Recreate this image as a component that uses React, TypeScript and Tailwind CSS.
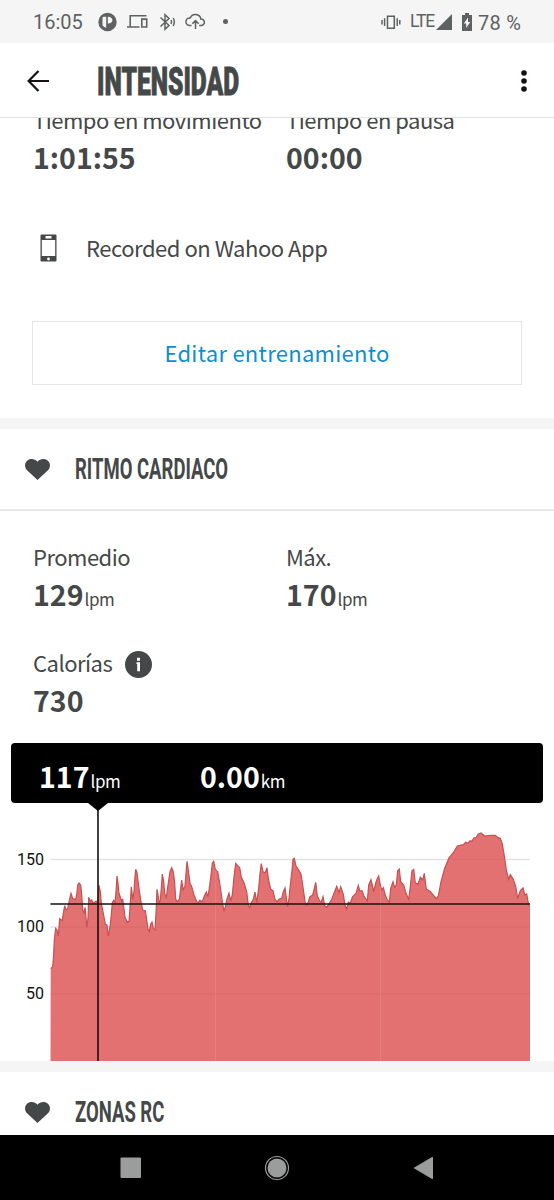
import type { ReactNode } from "react"

const AXIS = [
  { label: "150", y: 56.5 },
  { label: "100", y: 124 },
  { label: "50", y: 191 },
]

// Heart rate trace, x/y in chart pixels
const TRACE =
  "50.7,165.7 52.7,163.7 53.7,150 54.3,137 55.7,125.3 57,127 58.3,133 59.7,115.7 62.3,117.7 63.3,110.3 64.7,102.7 66,107 67.7,105.7 69.3,97.7 71,90.3 72.7,95.7 75.7,96.3 76.7,92 77.7,82 79,80 80.7,82 81.7,92 82.7,107 84,110 85,104.3 85.7,110.3 86.7,124.3 88,115.3 88.7,94.3 90.3,98 91.7,97 93,100.3 96,98.3 98,99.7 " +
  "99,82.3 100.3,88.7 101.3,100.3 103.3,110.3 105.3,121 107,122 108.3,133 110,123.7 111.3,112 112.3,99.7 113.7,97.3 115,99.7 116,88.7 117,73 118,80.3 119,90.3 120.3,94.3 121.7,98.3 122.7,95.7 123.7,103.7 125,114.3 127.3,119.3 129,118.3 130.3,100.3 131,88.7 131.3,83.7 132.7,96.3 134,88.7 134.7,77 135.7,66.3 137,69.7 138.7,83.7 140.7,97 142.7,107 145.3,107.7 146.7,117 148,126 149.3,128.7 150.7,121 152,119 153.3,125.3 155,127 " +
  "156,110.3 157,86.3 158,92 159,100.3 160.3,97 161.3,85.3 162.3,71 163.7,78.7 164.7,91 166.3,94.3 168,82 170,68.7 171.7,64.7 173.3,68.7 174.7,80.3 175.7,96.3 177.3,98.7 179.3,96.3 180.7,85.3 181.7,77 183,87 185,83 186,70.3 187,58.3 188.3,67 190,80.3 191.7,83.7 194,92 196.7,98.7 198.3,99.7 200,97.3 202.3,98.7 204.3,93 206.3,89 208,93.7 209.3,85.3 211,72 212.3,60.3 213.7,58.3 215.3,66.3 217.7,68.7 220,82 222.3,98.7 224,108.3 225.3,104.3 226.7,97 229,90.3 230.7,98 " +
  "232.3,92 234,73.7 235.7,60.3 239.7,64.7 241.3,74.3 244,79.7 246.7,88.7 248.3,102 249.7,104.7 251.3,99.7 253.3,96.3 255,89 256.7,99.7 258.7,85.3 260,70.3 261.3,60.7 263,68.7 265.3,69.7 267,64.7 268.3,75.3 270.7,86.3 273,87.7 275,96.3 277,98.7 279.3,96 281.7,95.3 283.3,88.7 285,85 286.3,95.3 287.7,103.7 289,95.3 290.3,82 292,67 293,56.3 294.3,55.3 296,63 298.7,67 301,71.3 302.7,82 305,98.7 306.7,102.3 308.3,98.7 310,93.7 312.7,92 314.3,85.3 315.7,79.3 317.3,93 319.3,97 321,99.7 323,93.7 324.7,102.7 326.7,104.3 " +
  "329.3,100.3 331.7,96.3 334,90.3 336.7,83.3 339,89.3 340.7,83.7 343.3,91.3 345,102 346.7,106.3 348.3,99 350.3,99.7 352.7,93.7 356,90.3 358.3,82.3 359.7,88 362,87.7 364,93 367.3,98 368.7,82 371,76.7 373.7,88.5 376.3,78 378.7,73 380.3,82 381.7,87 383.3,84.7 385.3,92 387.3,97 389.3,99.3 390.7,85.3 393,78.7 394.7,84.3 396.3,82 397.7,67.7 399.3,66 400.7,78.7 403.7,82 406,90.3 408.7,96.3 410.3,83.7 412,67.7 413.7,66.3 415.3,79.7 418,81.3 420.3,74.3 422.7,77 424.3,70.3 426.3,86.3 430,88.3 432.7,91.3 436.3,95.7 438.3,93 " +
  "441,78.7 444.7,65.3 449,54.7 453.3,49.7 457.3,43 463.3,41.7 465.7,39.3 468,40.3 470,37.7 472,38.3 473.7,35 476,34.7 478,31.3 481,30 484.7,33 490.7,32.3 495.3,32.3 498,34.7 500.3,35.3 502.3,41 504.3,53 506.3,67 508.7,76.3 510.3,71.7 513.3,76.3 515.7,83.7 517.7,95.3 520.3,87.7 523,85 524.7,92 526.7,91 528,98.7 529.3,103"

function StatusBar() {
  return (
    <div className="flex h-[43px] shrink-0 items-center bg-[#f5f5f5] pl-[33px] pr-[33px] font-['Roboto',sans-serif] text-[#5f6262]">
      <span className="w-[65px] text-xl">16:05</span>
      <svg className="h-5 w-[19px]" viewBox="0 0 19 20" fill="currentColor">
        <path fillRule="evenodd" d="M9.5.8a9.2 9.2 0 1 1 0 18.4 9.2 9.2 0 0 1 0-18.4ZM4.500 5.500v7.800c1 1.700 2.400 2.200 3.700 2.300V4.700H5.500zM9.800 4.700v6.800c2.800.2 4.600-1.200 4.600-3.400s-1.800-3.500-4.600-3.400Z" />
      </svg>
      <svg className="ml-2.5 h-4 w-[21px]" viewBox="0 0 21 16" fill="none" stroke="currentColor" strokeWidth="1.6">
        <path d="M19.500 1.800H3.200v10.400M0 13h12.500M14.800 5.100h4.900v7.900h-4.900z" />
      </svg>
      <svg className="ml-[11px] h-[18px] w-[18px]" viewBox="0 0 18 18" fill="none" stroke="currentColor" strokeWidth="1.5">
        <path d="m1.500 4.500 8.500 8-4 3.800V1.700l4 3.800-8.500 8M12 7.200q1 1.800 0 3.600M14.200 5q2.200 4 0 8" />
      </svg>
      <svg className="ml-2 h-[17px] w-[21px]" viewBox="0 0 21 17" fill="none" stroke="currentColor" strokeWidth="1.500">
        <path d="M6.500 12.500H4.700a3.700 3.700 0 0 1 0-7.500h.5a5.600 5.600 0 0 1 10.700 1.100 3.200 3.200 0 0 1 .6 6.400h-2.300M10.500 16V8M7.300 10.800l3.200-3.200 3.200 3.200" />
      </svg>
      <span className="ml-[17px] size-[5px] rounded-full bg-current" />
      <svg className="ml-auto h-4 w-5" viewBox="0 0 20 16" fill="none" stroke="currentColor" strokeWidth="1.5">
        <path d="M6.500 2.200h6.800v12H6.500zM3.600 4.300v7.700M1 6v4.500M16.200 4.300v7.700M18.800 6v4.500" />
      </svg>
      <span className="ml-[9px] w-[26px] text-[17.5px] tracking-[-1.2px]">LTE</span>
      <svg className="h-4 w-4" viewBox="0 0 16 16" fill="currentColor"><path d="M16 0v16H0z" /></svg>
      <svg className="ml-[10px] h-[18px] w-[10px]" viewBox="0 0 10 18" fill="currentColor">
        <path fillRule="evenodd" d="M3 0h4v2h3v16H0V2h3zM6 4.500 1.800 10.500h2.400V15L8.300 9H6z" />
      </svg>
      <span className="ml-1.5 whitespace-nowrap pt-0.5 text-xl tracking-[0.2px]">78 %</span>
    </div>
  )
}

function Heart() {
  return (
    <svg className="mt-px h-[21px] w-[25px]" viewBox="0 0 25 21" fill="#454848">
      <path d="M12.500 21 2.300 11.600C-.6 8.800-.7 4.500 1.900 2 4.900-.9 9.800-.5 12.500 2.800 15.200-.5 20.100-.9 23.100 2c2.600 2.500 2.500 6.800-.4 9.600z" />
    </svg>
  )
}

function SectionTitle({ children }: { children: ReactNode }) {
  return (
    <div className="flex h-20 items-center pl-[25px]">
      <Heart />
      <h2 className="ml-[25px] mt-0.5 origin-left scale-x-[0.627] whitespace-nowrap font-['Roboto',sans-serif] text-[29.5px] font-bold leading-none">{children}</h2>
    </div>
  )
}

function Metric({ label, value, unit, info }: { label: string; value: string; unit?: string; info?: boolean }) {
  return (
    <div className="w-[253px]">
      <div className="flex h-8 items-center gap-[13px] text-[22px] leading-8 tracking-[-0.5px]">
        {label}
        {info && (
          <svg className="mt-1 size-[27px]" viewBox="0 0 27 27">
            <circle cx="13.5" cy="13.5" r="13.5" fill="#454848" />
            <path d="M12 6.800h3v3h-3zM11.500 11.200H15v9h-2.800v-7.200h-.7z" fill="#fff" />
          </svg>
        )}
      </div>
      <div className="mt-[2px] flex h-10 items-baseline leading-10">
        <span className="text-[28.5px] font-bold">{value}</span>
        {unit && <span className="ml-[1px] text-[17px] tracking-[-0.4px]">{unit}</span>}
      </div>
    </div>
  )
}

function HeartRateChart() {
  return (
    <svg className="block h-[258px] w-full shrink-0" viewBox="0 0 554 258">
      {AXIS.map(a => (
        <g key={a.label}>
          <path d={`M50.500 ${a.y}H530`} stroke="#e3e3e3" strokeWidth="1.3" />
          <text x="44" y={a.y + 5} textAnchor="end" className="font-['Roboto',sans-serif] text-[16px]" fill="#111">{a.label}</text>
        </g>
      ))}
      <polygon points={`50.5,258 ${TRACE} 530,103 530,258`} fill="#db4b4b" fillOpacity="0.79" />
      <polyline points={TRACE} fill="none" stroke="#c94f51" strokeWidth="1.2" />
      <path d="M215.500 67V258M380.500 83V258" stroke="#e98c8c" strokeWidth="1" strokeOpacity="0.500" />
      <path d="M50.500 101H530M98 0V258" stroke="#171212" strokeWidth="1.600" />
      <path d="M88 0h20l-10 8z" fill="#000" />
    </svg>
  )
}

export default function App() {
  return (
    <div className="flex h-[1200px] w-[554px] flex-col overflow-hidden bg-white font-['Noto_Sans_CJK_JP',sans-serif] text-[#454848]">
      <StatusBar />
      <header className="flex h-[75px] shrink-0 items-center border-b border-[#e3e3e3] pl-[27px]">
        <svg className="mt-0.5 size-[22px]" viewBox="0 0 22 22" fill="none" stroke="#171212" strokeWidth="2.200">
          <path d="M22 11H2M11.500 1 1.600 11l9.900 10" />
        </svg>
        <h1 className="ml-12 mt-1 origin-left scale-x-[0.648] whitespace-nowrap font-['Roboto',sans-serif] text-[38px] font-black leading-none [-webkit-text-stroke:0.8px_#454848]">INTENSIDAD</h1>
        <svg className="ml-auto mr-[27px] mt-0.5 h-[22px] w-[6px] shrink-0" viewBox="0 0 6 22" fill="#171212">
          <circle cx="3" cy="3" r="2.800" />
          <circle cx="3" cy="11" r="2.800" />
          <circle cx="3" cy="19" r="2.800" />
        </svg>
      </header>

      <main className="flex min-h-0 flex-1 flex-col overflow-hidden">
        <div className="-mt-[15px] flex shrink-0 pl-[33px]">
          <Metric label="Tiempo en movimiento" value="1:01:55" />
          <Metric label="Tiempo en pausa" value="00:00" />
        </div>
        <div className="mt-[50px] flex h-10 shrink-0 items-center pl-10">
          <svg className="mt-0.5 h-7 w-[17px]" viewBox="0 0 17 28">
            <path fillRule="evenodd" fill="#454848" d="M1.500.5h14q1 0 1 1v25q0 1-1 1h-14q-1 0-1-1v-25q0-1 1-1ZM1.800 6v16h13.400V6zM5.500 2v2.500h6V2z" />
            <circle cx="8.500" cy="25" r="1.400" fill="#fff" />
          </svg>
          <span className="ml-[29px] text-[22px] leading-10 tracking-[-0.47px]">Recorded on Wahoo App</span>
        </div>
        <button className="mx-8 mt-[54px] h-16 shrink-0 border-[1.5px] border-[#e4e4e4] pb-0.5 text-[22px] tracking-[0.28px] text-[#0a90d0]">Editar entrenamiento</button>

        <section className="mt-[33px] shrink-0 border-t-[11px] border-[#f5f5f5]">
          <SectionTitle>RITMO CARDIACO</SectionTitle>
          <div className="border-t-2 border-[#e9e9e9] pl-[33px] pt-[29px]">
            <div className="flex">
              <Metric label="Promedio" value="129" unit="lpm" />
              <Metric label="Máx." value="170" unit="lpm" />
            </div>
            <div className="mt-8">
              <Metric label="Calorías" value="730" info />
            </div>
          </div>
          <div className="mx-[11px] mt-[23px] flex h-[60px] items-baseline rounded bg-black pl-7 leading-[66px] text-white">
            <span className="w-[161px] whitespace-nowrap"><b className="text-[28.5px]">117</b><span className="ml-[1px] text-[17px] tracking-[-0.4px]">lpm</span></span>
            <span className="whitespace-nowrap"><b className="text-[28.5px]">0.00</b><span className="ml-[1px] text-[17px] tracking-[-0.4px]">km</span></span>
          </div>
          <HeartRateChart />
        </section>

        <section className="shrink-0 border-t-[11px] border-[#f5f5f5]">
          <SectionTitle>ZONAS RC</SectionTitle>
        </section>
      </main>

      <nav className="h-[65px] shrink-0 bg-black">
        <svg className="block h-full w-full" viewBox="0 0 554 65" fill="#9b9d9c">
          <rect x="120.500" y="22.500" width="20.500" height="20.500" rx="1" />
          <circle cx="277" cy="33" r="9.500" />
          <circle cx="277" cy="33" r="11.500" fill="none" stroke="#9b9d9c" strokeWidth="1.200" />
          <path d="M413.500 33 432 22q1-.3 1 .7v20.600q0 1-1 .7z" />
        </svg>
      </nav>
    </div>
  )
}
